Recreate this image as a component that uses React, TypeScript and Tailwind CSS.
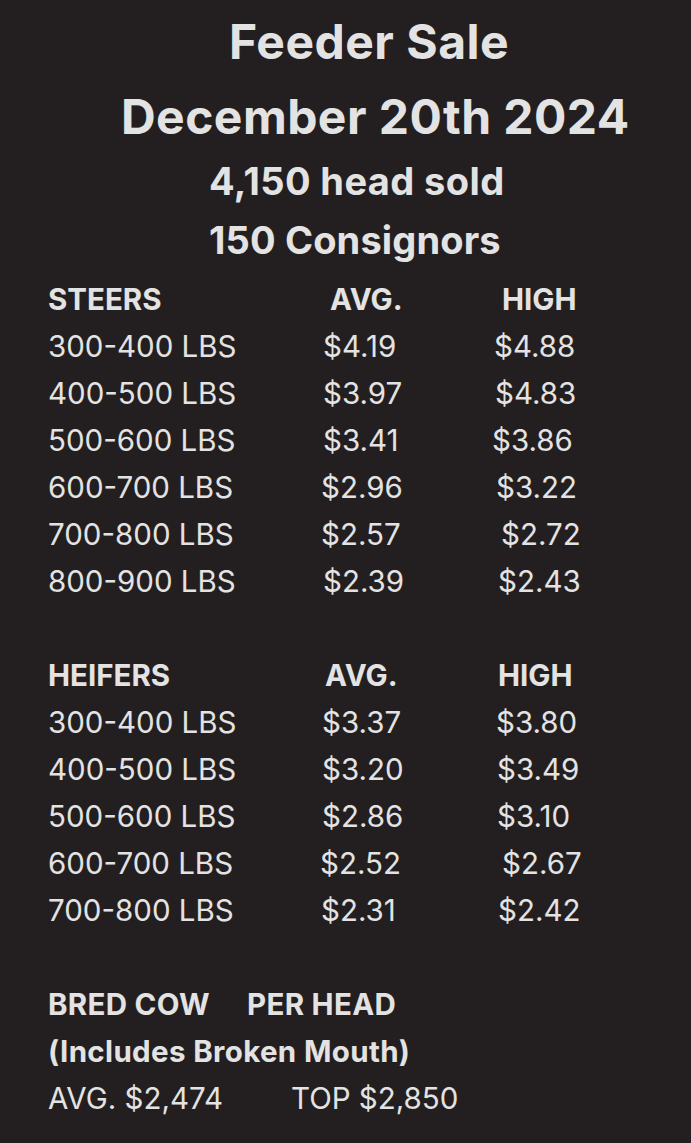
import React from "react";

type Row = { label: string; avg: string; high: string; avgCls: string };

const steers: Row[] = [
  { label: "300-400 LBS", avg: "$4.19", high: "$4.88", avgCls: "w-[171px]" },
  { label: "400-500 LBS", avg: "$3.97", high: "$4.83", avgCls: "w-[172px]" },
  { label: "500-600 LBS", avg: "$3.41", high: "$3.86", avgCls: "w-[169px]" },
  { label: "600-700 LBS", avg: "$2.96", high: "$3.22", avgCls: "w-[175px] ml-[-2px]" },
  { label: "700-800 LBS", avg: "$2.57", high: "$2.72", avgCls: "w-[180px] ml-[-2px]" },
  { label: "800-900 LBS", avg: "$2.39", high: "$2.43", avgCls: "w-[175px]" },
];

const heifers: Row[] = [
  { label: "300-400 LBS", avg: "$3.37", high: "$3.80", avgCls: "w-[174px] ml-[-1px]" },
  { label: "400-500 LBS", avg: "$3.20", high: "$3.49", avgCls: "w-[175px] ml-[-1px]" },
  { label: "500-600 LBS", avg: "$2.86", high: "$3.10", avgCls: "w-[175px] ml-[-1px]" },
  { label: "600-700 LBS", avg: "$2.52", high: "$2.67", avgCls: "w-[182px] ml-[-3px]" },
  { label: "700-800 LBS", avg: "$2.31", high: "$2.42", avgCls: "w-[177px] ml-[-2px]" },
];

function DataRow({ r }: { r: Row }) {
  return (
    <div className="flex h-[47px] items-center whitespace-nowrap">
      <span className="w-[275px] shrink-0">{r.label}</span>
      <span className={`shrink-0 ${r.avgCls}`}>{r.avg}</span>
      <span className="shrink-0">{r.high}</span>
    </div>
  );
}

export default function App() {
  return (
    <div
      className="w-[691px] h-[1143px] bg-[#231f20] text-[#e3e3e3] overflow-hidden"
      style={{ fontFamily: "Inter, 'Noto Sans', sans-serif" }}
    >
      <div className="flex flex-col pt-[12px]">
        <div className="h-[60px] flex items-center pl-[229px] text-[48px] font-bold tracking-[0.5px] whitespace-nowrap">
          Feeder Sale
        </div>
        <div className="h-[90px] flex items-center pl-[121px] text-[48px] font-bold tracking-[0.45px] whitespace-nowrap">
          December 20th 2024
        </div>
        <div className="h-[38px] flex items-center pl-[209px] text-[38px] font-bold tracking-[0.4px] whitespace-nowrap">
          4,150 head sold
        </div>
        <div className="h-[80px] flex items-center pl-[209px] text-[38px] font-bold tracking-[0.15px] whitespace-nowrap">
          150 Consignors
        </div>
      </div>

      <div className="pl-[48px] text-[29.5px] mt-[-4px]">
        <div className="flex h-[47px] items-center font-bold whitespace-nowrap">
          <span className="w-[282px] shrink-0">STEERS</span>
          <span className="w-[172px] shrink-0">AVG.</span>
          <span>HIGH</span>
        </div>
        {steers.map((r) => (
          <DataRow key={"s" + r.label} r={r} />
        ))}
        <div className="h-[47px]" />
        <div className="flex h-[47px] items-center font-bold whitespace-nowrap">
          <span className="w-[277px] shrink-0">HEIFERS</span>
          <span className="w-[173px] shrink-0">AVG.</span>
          <span>HIGH</span>
        </div>
        {heifers.map((r) => (
          <DataRow key={"h" + r.label} r={r} />
        ))}
        <div className="h-[47px]" />
        <div className="flex h-[47px] items-center font-bold tracking-[0.3px] whitespace-nowrap">
          <span className="w-[199px] shrink-0">BRED COW</span>
          <span>PER HEAD</span>
        </div>
        <div className="flex h-[47px] items-center font-bold tracking-[0.35px] whitespace-nowrap">
          (Includes Broken Mouth)
        </div>
        <div className="flex h-[47px] items-center whitespace-nowrap">
          <span className="w-[243px] shrink-0">AVG. $2,474</span>
          <span>TOP $2,850</span>
        </div>
      </div>
    </div>
  );
}
